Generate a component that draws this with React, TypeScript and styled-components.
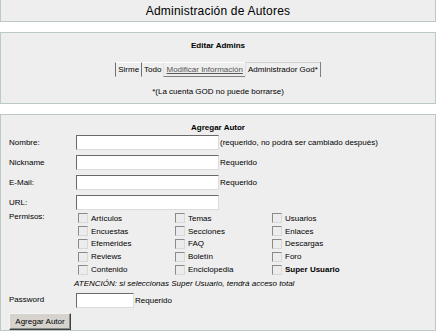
import React from "react";
import styled, { createGlobalStyle } from "styled-components";

const Global = createGlobalStyle`
  html, body {
    margin: 0;
    padding: 0;
    background: #ffffff;
  }
  body {
    font-family: "Liberation Sans", Arial, Helvetica, sans-serif;
    font-size: 8px;
    color: #000;
  }
`;

const Page = styled.div`
  display: flex;
  flex-direction: column;
  gap: 10px;
  width: 436px;
`;

const Panel = styled.div<{ $noTop?: boolean }>`
  background: #eeeeee;
  border: 1px solid #bccac6;
  border-top-width: ${(p) => (p.$noTop ? 0 : 1)}px;
  box-sizing: border-box;
  width: 436px;
`;

const Title = styled.div`
  height: 21px;
  display: flex;
  align-items: center;
  justify-content: center;
  font-size: 12px;
  letter-spacing: 0.2px;
`;

const AdminsBody = styled.div`
  display: flex;
  flex-direction: column;
  align-items: center;
  padding: 8px 0 6px;
`;

const Heading = styled.div`
  font-weight: bold;
  line-height: 10px;
`;

const LinkBar = styled.div`
  display: flex;
  margin-top: 11px;
  height: 15px;
  border-right: 1px solid #808080;
`;

const LinkCell = styled.span<{ $kind?: "link" | "cur" }>`
  display: flex;
  align-items: center;
  padding: 0 2px;
  border-left: ${(p) => (p.$kind ? "1px solid #e0e0e0" : "1px solid #6e6e6e")};
  border-top: ${(p) => (p.$kind === "cur" ? "1px solid #d0d0d0" : "1px solid #ffffff")};
  border-bottom: ${(p) => (p.$kind === "link" ? "1px solid #808080" : "1px solid transparent")};
  color: ${(p) => (p.$kind === "link" ? "#555" : "#000")};
  text-decoration: ${(p) => (p.$kind === "link" ? "underline" : "none")};
  white-space: nowrap;
`;

const Note = styled.div`
  margin-top: 10px;
  line-height: 10px;
`;

const AddBody = styled.div`
  display: flex;
  flex-direction: column;
  padding: 8px 0 0 8px;
`;

const CenterHeading = styled(Heading)`
  align-self: center;
  margin-left: -8px;
`;

const FormRow = styled.div<{ $gap?: number; $top?: boolean }>`
  display: grid;
  grid-template-columns: 67px auto;
  align-items: ${(p) => (p.$top ? "start" : "center")};
  margin-top: ${(p) => p.$gap ?? 5}px;
`;

const Label = styled.label`
  line-height: 10px;
`;

const InputLine = styled.div`
  display: flex;
  align-items: center;
  gap: 1px;
`;

const TextBox = styled.div<{ $w: number }>`
  width: ${(p) => p.$w}px;
  height: 15px;
  box-sizing: border-box;
  background: #fff;
  border: 1px solid;
  border-color: #6a6a6a #dcdcdc #dcdcdc #6a6a6a;
`;

const Hint = styled.span`
  white-space: nowrap;
`;

const PermGrid = styled.div`
  display: grid;
  grid-template-columns: 97px 97px 97px;
  grid-auto-rows: 12.8px;
  padding-left: 2px;
`;

const PermItem = styled.div<{ $strong?: boolean }>`
  display: flex;
  align-items: center;
  gap: 3px;
  font-weight: ${(p) => (p.$strong ? "bold" : "normal")};
`;

const Check = styled.span`
  width: 10px;
  height: 10px;
  box-sizing: border-box;
  background: #ececec;
  border: 1px solid;
  border-color: #8a8a8a #d8d8d8 #d8d8d8 #8a8a8a;
`;

const Warning = styled.div`
  margin: 3px 0 0 65px;
  font-style: italic;
  line-height: 10px;
`;

const Button = styled.button`
  margin-top: 5px;
  width: 62px;
  height: 17px;
  padding: 0;
  font-family: inherit;
  font-size: 8px;
  color: #000;
  background: #d6d3ce;
  border: 1px solid;
  border-color: #f4f4f4 #404040 #404040 #f4f4f4;
  box-shadow: inset -1px -1px 0 #8a8a8a;
`;

const perms: [string, boolean?][] = [
  ["Artículos"], ["Temas"], ["Usuarios"],
  ["Encuestas"], ["Secciones"], ["Enlaces"],
  ["Efemérides"], ["FAQ"], ["Descargas"],
  ["Reviews"], ["Boletín"], ["Foro"],
  ["Contenido"], ["Enciclopedia"], ["Super Usuario", true],
];

export default function App() {
  return (
    <>
      <Global />
      <Page>
        <Panel $noTop>
          <Title>Administración de Autores</Title>
        </Panel>

        <Panel>
          <AdminsBody>
            <Heading>Editar Admins</Heading>
            <LinkBar>
              <LinkCell>Sirme</LinkCell>
              <LinkCell>Todo</LinkCell>
              <LinkCell $kind="link">Modificar Información</LinkCell>
              <LinkCell $kind="cur">Administrador God*</LinkCell>
            </LinkBar>
            <Note>*(La cuenta GOD no puede borrarse)</Note>
          </AdminsBody>
        </Panel>

        <Panel>
          <AddBody>
            <CenterHeading>Agregar Autor</CenterHeading>
            <FormRow $gap={2}>
              <Label>Nombre:</Label>
              <InputLine>
                <TextBox $w={143} />
                <Hint>(requerido, no podrá ser cambiado después)</Hint>
              </InputLine>
            </FormRow>
            <FormRow>
              <Label>Nickname</Label>
              <InputLine>
                <TextBox $w={143} />
                <Hint>Requerido</Hint>
              </InputLine>
            </FormRow>
            <FormRow>
              <Label>E-Mail:</Label>
              <InputLine>
                <TextBox $w={143} />
                <Hint>Requerido</Hint>
              </InputLine>
            </FormRow>
            <FormRow>
              <Label>URL:</Label>
              <InputLine>
                <TextBox $w={143} />
              </InputLine>
            </FormRow>
            <FormRow $gap={2} $top>
              <Label>Permisos:</Label>
              <PermGrid>
                {perms.map(([name, strong]) => (
                  <PermItem key={name} $strong={strong}>
                    <Check />
                    {name}
                  </PermItem>
                ))}
              </PermGrid>
            </FormRow>
            <Warning>ATENCIÓN: si seleccionas Super Usuario, tendrá acceso total</Warning>
            <FormRow $gap={4}>
              <Label>Password</Label>
              <InputLine>
                <TextBox $w={58} />
                <Hint>Requerido</Hint>
              </InputLine>
            </FormRow>
            <div>
              <Button>Agregar Autor</Button>
            </div>
          </AddBody>
        </Panel>
      </Page>
    </>
  );
}
